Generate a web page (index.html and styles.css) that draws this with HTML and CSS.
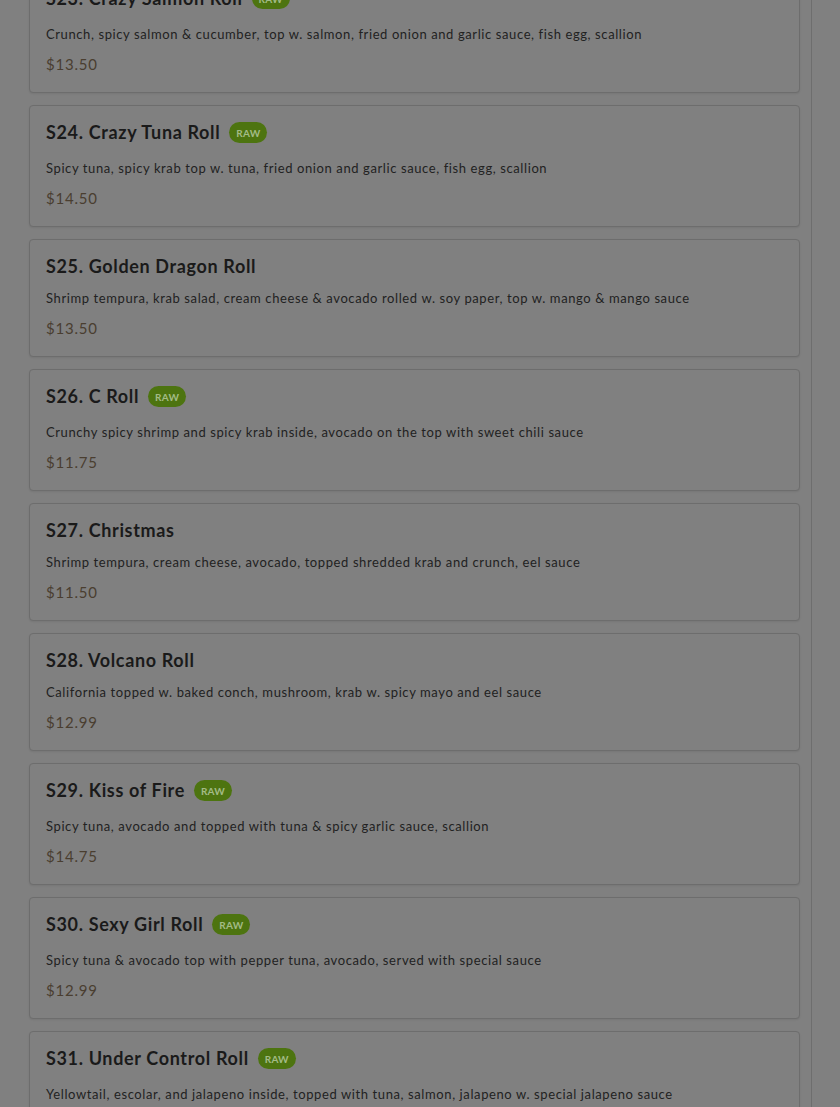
FILE: index.html
```html
<!DOCTYPE html>
<html lang="en">
<head>
<meta charset="utf-8">
<title>Menu</title>
<link rel="stylesheet" href="styles.css">
</head>
<body>
<main class="page">
  <div class="list">
    <article class="card">
      <div class="head"><h3 class="title">S23. Crazy Salmon Roll</h3><span class="badge">RAW</span></div>
      <p class="desc">Crunch, spicy salmon &amp; cucumber, top w. salmon, fried onion and garlic sauce, fish egg, scallion</p>
      <p class="price">$13.50</p>
    </article>
    <article class="card">
      <div class="head"><h3 class="title">S24. Crazy Tuna Roll</h3><span class="badge">RAW</span></div>
      <p class="desc">Spicy tuna, spicy krab top w. tuna, fried onion and garlic sauce, fish egg, scallion</p>
      <p class="price">$14.50</p>
    </article>
    <article class="card">
      <div class="head"><h3 class="title">S25. Golden Dragon Roll</h3></div>
      <p class="desc">Shrimp tempura, krab salad, cream cheese &amp; avocado rolled w. soy paper, top w. mango &amp; mango sauce</p>
      <p class="price">$13.50</p>
    </article>
    <article class="card">
      <div class="head"><h3 class="title">S26. C Roll</h3><span class="badge">RAW</span></div>
      <p class="desc">Crunchy spicy shrimp and spicy krab inside, avocado on the top with sweet chili sauce</p>
      <p class="price">$11.75</p>
    </article>
    <article class="card">
      <div class="head"><h3 class="title">S27. Christmas</h3></div>
      <p class="desc">Shrimp tempura, cream cheese, avocado, topped shredded krab and crunch, eel sauce</p>
      <p class="price">$11.50</p>
    </article>
    <article class="card">
      <div class="head"><h3 class="title">S28. Volcano Roll</h3></div>
      <p class="desc">California topped w. baked conch, mushroom, krab w. spicy mayo and eel sauce</p>
      <p class="price">$12.99</p>
    </article>
    <article class="card">
      <div class="head"><h3 class="title">S29. Kiss of Fire</h3><span class="badge">RAW</span></div>
      <p class="desc">Spicy tuna, avocado and topped with tuna &amp; spicy garlic sauce, scallion</p>
      <p class="price">$14.75</p>
    </article>
    <article class="card">
      <div class="head"><h3 class="title">S30. Sexy Girl Roll</h3><span class="badge">RAW</span></div>
      <p class="desc">Spicy tuna &amp; avocado top with pepper tuna, avocado, served with special sauce</p>
      <p class="price">$12.99</p>
    </article>
    <article class="card">
      <div class="head"><h3 class="title">S31. Under Control Roll</h3><span class="badge">RAW</span></div>
      <p class="desc">Yellowtail, escolar, and jalapeno inside, topped with tuna, salmon, jalapeno w. special jalapeno sauce</p>
      <p class="price">$13.99</p>
    </article>
  </div>
</main>
</body>
</html>
```
FILE: styles.css
```css
html, body {
  margin: 0;
  padding: 0;
  background: #808080;
  height: 100%;
  overflow: hidden;
}

body {
  font-family: "Lato", "Noto Sans", sans-serif;
  color: #1c1c1c;
}

.page {
  box-sizing: border-box;
  width: 812px;
  min-height: 100%;
  padding: 0 11px 0 29px;
  border-right: 1px solid #6e6e6e;
}

.list {
  display: flex;
  flex-direction: column;
  gap: 12px;
  margin-top: -29px;
}

.card {
  border: 1px solid #6d6d6d;
  border-radius: 4px;
  padding: 16px 16px 18px;
  background: #808080;
  box-shadow: 0 1px 2px rgba(0, 0, 0, 0.08);
}

.head {
  display: flex;
  align-items: flex-start;
  gap: 9px;
}

.title {
  margin: 0;
  font-size: 18px;
  line-height: 20px;
  font-weight: 700;
  letter-spacing: 0.65px;
  color: #1a1a1a;
}

.badge {
  display: inline-flex;
  align-items: center;
  justify-content: center;
  height: 21px;
  margin: 0 0 3px;
  padding: 0 7px;
  border-radius: 11px;
  background: #4d7410;
  color: #a3bb86;
  font-size: 10px;
  font-weight: 700;
  letter-spacing: 0.2px;
}

.desc {
  margin: 12px 0 0;
  font-size: 13px;
  line-height: 20px;
  letter-spacing: 0.6px;
  color: #222222;
}

.price {
  margin: 10px 0 0;
  font-size: 15px;
  line-height: 20px;
  letter-spacing: 0.8px;
  color: #4a3e30;
}
```
